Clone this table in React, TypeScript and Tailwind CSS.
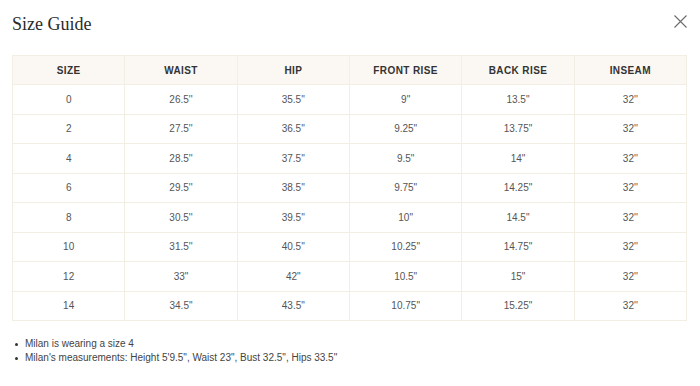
import React from "react";

const columns = ["Size", "Waist", "Hip", "Front Rise", "Back Rise", "Inseam"];

const rows = [
  ["0", "26.5''", "35.5''", "9\"", "13.5\"", "32''"],
  ["2", "27.5''", "36.5''", "9.25\"", "13.75\"", "32''"],
  ["4", "28.5''", "37.5''", "9.5\"", "14\"", "32''"],
  ["6", "29.5''", "38.5''", "9.75\"", "14.25\"", "32''"],
  ["8", "30.5''", "39.5''", "10\"", "14.5\"", "32''"],
  ["10", "31.5''", "40.5''", "10.25\"", "14.75\"", "32''"],
  ["12", "33\"", "42\"", "10.5\"", "15\"", "32''"],
  ["14", "34.5\"", "43.5\"", "10.75\"", "15.25\"", "32''"],
];

const notes = [
  "Milan is wearing a size 4",
  "Milan's measurements: Height 5'9.5\", Waist 23\", Bust 32.5\", Hips 33.5\"",
];

export default function App() {
  return (
    <div className="w-[700px] h-[386px] bg-white overflow-hidden font-['Liberation_Sans',Arial,sans-serif]">
      <div className="flex items-start justify-between pl-3 pr-[13px] pt-[12px] h-[55px]">
        <h1 className="font-['Liberation_Serif',serif] text-[18px] leading-[24px] text-[#2b2b2b]">
          Size Guide
        </h1>
        <button className="mt-[3px] text-[#6b6b6b]">
          <svg width="13" height="13" viewBox="0 0 13 13" fill="none" stroke="currentColor" strokeWidth="1.1">
            <path d="M0.5 0.5L12.5 12.5M12.5 0.5L0.5 12.5" />
          </svg>
        </button>
      </div>

      <div className="px-3">
        <table className="w-[675px] border-collapse table-fixed">
          <thead>
            <tr className="bg-[#fbf8f3] h-[29px]">
              {columns.map((c) => (
                <th
                  key={c}
                  className="border border-[#f2eee4] text-[10px] font-bold uppercase tracking-[0.4px] text-[#333333] p-0"
                >
                  {c}
                </th>
              ))}
            </tr>
          </thead>
          <tbody>
            {rows.map((r) => (
              <tr key={r[0]} className="h-[29.5px]">
                {r.map((v, i) => (
                  <td
                    key={i}
                    className="border border-[#f2eee4] text-center text-[10px] text-[#555555] p-0"
                  >
                    {v}
                  </td>
                ))}
              </tr>
            ))}
          </tbody>
        </table>
      </div>

      <ul className="mt-[16px] pl-[15px] text-[10px] leading-[14px] text-[#444444]">
        {notes.map((n) => (
          <li key={n} className="flex items-center">
            <span className="w-[3px] h-[3px] rounded-full bg-[#333333] mr-[7px]" />
            <span>{n}</span>
          </li>
        ))}
      </ul>
    </div>
  );
}
